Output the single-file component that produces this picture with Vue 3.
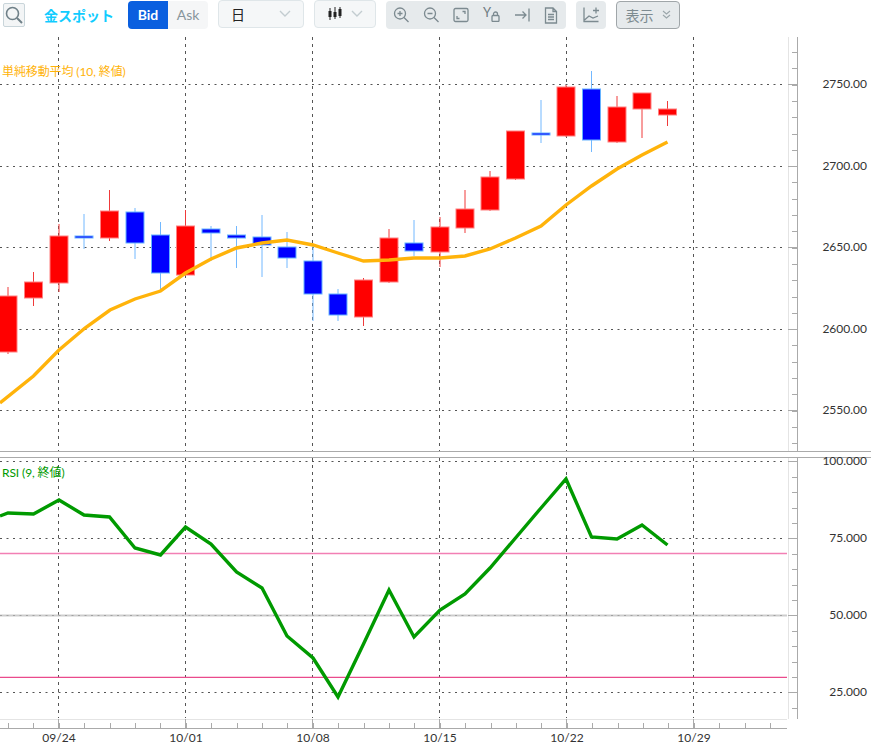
<script setup>
const candles = [
  { x: 8, top: 296, bottom: 352, high: 287, low: 354, up: true },
  { x: 33.5, top: 282, bottom: 298, high: 272, low: 306, up: true },
  { x: 59, top: 236, bottom: 283, high: 224, low: 292, up: true },
  { x: 84, top: 236, bottom: 238, high: 214, low: 249, up: false },
  { x: 109.5, top: 211, bottom: 238, high: 190, low: 241, up: true },
  { x: 135, top: 212, bottom: 243, high: 208, low: 259, up: false },
  { x: 160.5, top: 235, bottom: 273, high: 222, low: 290, up: false },
  { x: 185.5, top: 226, bottom: 275, high: 210, low: 276, up: true },
  { x: 211, top: 229, bottom: 233, high: 226, low: 261, up: false },
  { x: 236.5, top: 235, bottom: 238, high: 226, low: 268, up: false },
  { x: 262, top: 237, bottom: 245, high: 215, low: 277, up: false },
  { x: 287, top: 247, bottom: 258, high: 232, low: 268, up: false },
  { x: 313, top: 261, bottom: 294, high: 244, low: 321, up: false },
  { x: 338, top: 294, bottom: 315, high: 289, low: 321, up: false },
  { x: 363.5, top: 280, bottom: 317, high: 278, low: 326, up: true },
  { x: 389, top: 238, bottom: 282, high: 229, low: 283, up: true },
  { x: 414, top: 243, bottom: 251, high: 220, low: 256, up: false },
  { x: 440, top: 227, bottom: 252, high: 217, low: 267, up: true },
  { x: 465, top: 209, bottom: 228, high: 190, low: 233, up: true },
  { x: 490, top: 177, bottom: 210, high: 171, low: 211, up: true },
  { x: 515.5, top: 131, bottom: 179, high: 131, low: 180, up: true },
  { x: 541, top: 133, bottom: 135, high: 100, low: 143, up: false },
  { x: 566, top: 87, bottom: 136, high: 85, low: 137, up: true },
  { x: 591.5, top: 89, bottom: 140, high: 71, low: 152, up: false },
  { x: 617, top: 107, bottom: 142, high: 96, low: 143, up: true },
  { x: 642, top: 93, bottom: 109, high: 93, low: 138, up: true },
  { x: 667.5, top: 109, bottom: 115, high: 101, low: 126, up: true },
];

const sma = "0,403 33.5,376 59,350 85,328 110,310 135,299 160.5,291 185.5,273 211,259 236.5,248 262,243 287,240 313,245 338,253 363.5,261 389,260 414,258 440,258 465,256 490,249 515.5,238 541,226 566,205 591.5,186 617,169 642,155 667.5,142";
const rsi = "0,516 8,513 33.5,514 59,500 84,515 109.5,517 135,548 160.5,555 185.5,527 211,544 236.5,572 262,588 287,636 313,658 338,697 363.5,644 389,590 414,637 440,610 465,594 490,568 515.5,538 541,508 566,479 591.5,537 617,539 642,525 667.5,545";

const gridX = [58.5, 185.5, 312.5, 439.5, 566.5, 693.5];
const dates = [
  { x: 59, label: "09/24" },
  { x: 186, label: "10/01" },
  { x: 313, label: "10/08" },
  { x: 440, label: "10/15" },
  { x: 567, label: "10/22" },
  { x: 694, label: "10/29" },
];
const priceLabels = [
  { y: 84.5, label: "2750.00" },
  { y: 166.5, label: "2700.00" },
  { y: 247.5, label: "2650.00" },
  { y: 329.5, label: "2600.00" },
  { y: 410.5, label: "2550.00" },
];
const rsiLabels = [
  { y: 461.5, label: "100.000" },
  { y: 538.5, label: "75.000" },
  { y: 615.5, label: "50.000" },
  { y: 692.5, label: "25.000" },
];

// ticks on the axes
const priceTicks = [];
for (let y = 52; y < 450; y += 16.3) priceTicks.push(Math.round(y) + 0.5);
const rsiTicks = [];
for (let y = 446; y < 718; y += 15.4) if (y > 458) rsiTicks.push(Math.round(y) + 0.5);
const timeTicks = [];
for (let i = 0; i < 31; i++) timeTicks.push(Math.round(8 + i * 25.4) + 0.5);
</script>

<template>
  <div class="page">
    <div class="toolbar">
      <button class="search-btn">
        <svg width="18" height="18" viewBox="0 0 18 18">
          <circle cx="7.5" cy="7.5" r="6" fill="none" stroke="#6f8088" stroke-width="1.6" />
          <path d="M12 12l5 5" stroke="#6f8088" stroke-width="2" />
        </svg>
      </button>
      <span class="title">金スポット</span>
      <div class="bid-ask">
        <span class="bid">Bid</span>
        <span class="ask">Ask</span>
      </div>
      <div class="select period">
        <span>日</span>
        <svg class="chev" width="12" height="8" viewBox="0 0 12 8"><path d="M1 1l5 5 5-5" fill="none" stroke="#c3ccd0" stroke-width="1.4" /></svg>
      </div>
      <div class="select kind">
        <svg width="14" height="14" viewBox="0 0 14 14">
          <path d="M2 1v12M7 0v12M12 0v11" stroke="#222" stroke-width="1" />
          <rect x="0.5" y="4" width="3" height="6" fill="#222" />
          <rect x="5.5" y="5" width="3" height="5" fill="#222" />
          <rect x="10.5" y="2" width="3" height="7" fill="#222" />
        </svg>
        <svg class="chev" width="12" height="8" viewBox="0 0 12 8"><path d="M1 1l5 5 5-5" fill="none" stroke="#c3ccd0" stroke-width="1.4" /></svg>
      </div>
      <div class="tools">
        <svg width="16" height="16" viewBox="0 0 16 16" class="ico">
          <circle cx="7" cy="6.5" r="5.5" /><path d="M7 4v5M4.5 6.5h5M11 10.5l4.5 4.5" />
        </svg>
        <svg width="16" height="16" viewBox="0 0 16 16" class="ico">
          <circle cx="7" cy="6.5" r="5.5" /><path d="M4.5 6.5h5M11 10.5l4.5 4.5" />
        </svg>
        <svg width="16" height="16" viewBox="0 0 16 16" class="ico">
          <rect x="1" y="1.5" width="14" height="13" rx="1.5" /><path d="M9.5 4.5h2.5v2.5M6.5 11.5h-2.5v-2.5" />
        </svg>
        <span class="ylock">
          <span>Y</span>
          <svg width="9" height="11" viewBox="0 0 9 11" class="ico">
            <rect x="1" y="4.5" width="7" height="6" rx="1" /><path d="M2.5 4.5v-1.5a2 2 0 0 1 4 0v1.5" />
          </svg>
        </span>
        <svg width="16" height="14" viewBox="0 0 16 14" class="ico">
          <path d="M1 7h11M8.5 3.5l3.5 3.5-3.5 3.5M15 0.5v13" />
        </svg>
        <svg width="14" height="17" viewBox="0 0 14 17" class="ico">
          <path d="M1.5 1h7.5l3.5 3.5v11.5h-11zM9 1v3.5h3.5M4 7.5h6M4 10h6M4 12.5h6" />
        </svg>
      </div>
      <div class="tools add">
        <svg width="16" height="16" viewBox="0 0 16 16" class="ico">
          <path d="M1 0.5v14h14.5M1.5 13l4.5-4 4 2 5-2M13 0.5v6M10 3.5h6" />
        </svg>
      </div>
      <button class="show-btn">
        <span>表示</span>
        <svg width="9" height="10" viewBox="0 0 9 10"><path d="M1 1l3.5 3 3.5-3M1 5l3.5 3 3.5-3" fill="none" stroke="#9aa5aa" stroke-width="1.1" /></svg>
      </button>
    </div>

    <svg class="chart" width="871" height="718" viewBox="0 30 871 718">
      <!-- grid -->
      <g class="grid">
        <line v-for="x in gridX" :key="'m' + x" class="vert" :x1="x" :x2="x" y1="37" y2="451" />
        <line v-for="x in gridX" :key="'r' + x" class="vert" :x1="x" :x2="x" y1="458" y2="718" />
        <line v-for="p in priceLabels" :key="p.label" x1="0" x2="784" :y1="p.y" :y2="p.y" />
        <line v-for="p in rsiLabels" :key="p.label" x1="0" x2="784" :y1="p.y" :y2="p.y" />
      </g>
      <line x1="0" x2="787" y1="615.5" y2="615.5" stroke="#bcbcbc" stroke-width="2" stroke-opacity="0.75" />
      <line x1="0" x2="787" y1="553.4" y2="553.4" stroke="#f27fb4" stroke-width="1.5" />
      <line x1="0" x2="787" y1="677.4" y2="677.4" stroke="#ea4a8c" stroke-width="1.4" />

      <!-- candles -->
      <g v-for="c in candles" :key="c.x">
        <line :x1="c.x" :x2="c.x" :y1="c.high" :y2="c.low" :stroke="c.up ? '#f03a3a' : '#72b8ff'" />
        <rect
          :x="c.x - 9"
          :y="c.top"
          width="18"
          :height="c.bottom - c.top"
          :fill="c.up ? '#ff0000' : '#0000ff'"
          :stroke="c.up ? '#ff8080' : '#66b3ff'"
        />
      </g>

      <polyline :points="sma" fill="none" stroke="#ffb30a" stroke-width="3.4" />
      <polyline :points="rsi" fill="none" stroke="#009a00" stroke-width="3.4" />

      <text x="2" y="76" class="legend sma">単純移動平均 (10, 終値)</text>
      <text x="2" y="477" class="legend rsi">RSI (9, 終値)</text>

      <!-- pane separator -->
      <line x1="0" x2="871" y1="451.5" y2="451.5" stroke="#aaa" />
      <line x1="0" x2="871" y1="457.5" y2="457.5" stroke="#aaa" />

      <!-- right axis -->
      <line x1="788.5" x2="788.5" y1="37" y2="451" stroke="#e4e4e4" />
      <line x1="797.5" x2="797.5" y1="37" y2="451" stroke="#aaa" />
      <line x1="788.5" x2="788.5" y1="458" y2="719" stroke="#e4e4e4" />
      <line x1="797.5" x2="797.5" y1="458" y2="719" stroke="#aaa" />
      <line v-for="y in priceTicks" :key="'pt' + y" x1="792" x2="797" :y1="y" :y2="y" stroke="#aaa" />
      <line v-for="y in rsiTicks" :key="'rt' + y" x1="792" x2="797" :y1="y" :y2="y" stroke="#aaa" />
      <line v-for="p in priceLabels" :key="'pm' + p.y" x1="788" x2="797" :y1="p.y" :y2="p.y" stroke="#aaa" />
      <line v-for="p in rsiLabels" :key="'rm' + p.y" x1="788" x2="797" :y1="p.y" :y2="p.y" stroke="#aaa" />
      <text v-for="p in priceLabels" :key="'pl' + p.y" x="867" :y="p.y + 3.5" class="axis end">{{ p.label }}</text>
      <text v-for="p in rsiLabels" :key="'rl' + p.y" x="867" :y="p.y + 3.5" class="axis end">{{ p.label }}</text>

      <!-- time axis -->
      <line x1="0" x2="787" y1="719.5" y2="719.5" stroke="#e4e4e4" />
      <line x1="0" x2="787" y1="728.5" y2="728.5" stroke="#aaa" />
      <line v-for="x in timeTicks" :key="'tt' + x" :x1="x" :x2="x" y1="723" y2="728" stroke="#aaa" />
      <line v-for="x in gridX" :key="'tm' + x" :x1="x" :x2="x" y1="719" y2="728" stroke="#aaa" />
      <text v-for="d in dates" :key="d.label" :x="d.x" y="741.5" class="axis mid">{{ d.label }}</text>
    </svg>
  </div>
</template>

<style scoped>
.page {
  width: 871px;
  height: 748px;
  overflow: hidden;
  font-family: Lato, "Noto Sans CJK JP", sans-serif;
  background: #fff;
}

.toolbar {
  display: flex;
  align-items: center;
  height: 30px;
  padding-left: 3px;
}

.search-btn {
  width: 22px;
  height: 24px;
  padding: 0;
  display: flex;
  align-items: center;
  justify-content: center;
  background: #f3f5f6;
  border: 1px solid #c9d5da;
  border-radius: 2px;
}

.title {
  margin-left: 19px;
  width: 70px;
  font-size: 14px;
  font-weight: 700;
  color: #10ccff;
  white-space: nowrap;
}

.bid-ask {
  display: flex;
  margin-left: 14px;
  height: 28px;
  font-size: 14px;
  line-height: 28px;
  text-align: center;
}

.bid {
  width: 40px;
  background: #0a5fdf;
  color: #fff;
  font-weight: 700;
  border-radius: 4px 0 0 4px;
}

.ask {
  width: 40px;
  background: #f5f6f7;
  color: #87959c;
  border-radius: 0 4px 4px 0;
}

.select {
  display: flex;
  align-items: center;
  height: 28px;
  box-sizing: border-box;
  background: #f5f7f8;
  border: 1px solid #dfe6e9;
  border-radius: 4px;
  margin-top: -2px;
}

.period {
  width: 86px;
  margin-left: 10px;
  padding-left: 12px;
  font-size: 14px;
  color: #222;
}

.kind {
  width: 62px;
  margin-left: 10px;
  padding-left: 13px;
}

.chev {
  margin-left: auto;
  margin-right: 12px;
}

.tools {
  display: flex;
  align-items: center;
  gap: 14px;
  height: 28px;
  margin-left: 10px;
  padding: 0 8px 0 7px;
  background: #e6eaec;
  border-radius: 4px;
}

.tools.add {
  padding: 0 7px;
}

.ico {
  fill: none;
  stroke: #7c8a90;
  stroke-width: 1.3;
  flex: none;
}

.ylock {
  display: flex;
  align-items: flex-end;
  width: 17px;
  height: 18px;
  font-size: 13px;
  line-height: 12px;
  color: #6e7c82;
}

.ylock span {
  align-self: flex-start;
  width: 8px;
}

.ylock svg {
  margin-bottom: 2px;
}

.show-btn {
  display: flex;
  align-items: center;
  justify-content: center;
  gap: 8px;
  width: 64px;
  height: 28px;
  margin-left: 10px;
  padding: 0;
  background: #e6eaec;
  border: 1px solid #a0a6a9;
  border-radius: 4px;
  font-family: inherit;
  font-size: 14px;
  color: #7c8a90;
}

.chart {
  display: block;
}

.grid line {
  stroke: #555;
  stroke-dasharray: 2 4.5;
}

.grid line.vert {
  stroke-dasharray: 3 4;
}

.legend {
  font-size: 12px;
  letter-spacing: -0.1px;
}

.legend.sma {
  fill: #ffb30a;
}

.legend.rsi {
  fill: #009a00;
}

.axis {
  font-size: 12px;
  fill: #333;
}

.end {
  text-anchor: end;
}

.mid {
  text-anchor: middle;
}
</style>

<style>
html,
body {
  margin: 0;
  background: #fff;
}
</style>
